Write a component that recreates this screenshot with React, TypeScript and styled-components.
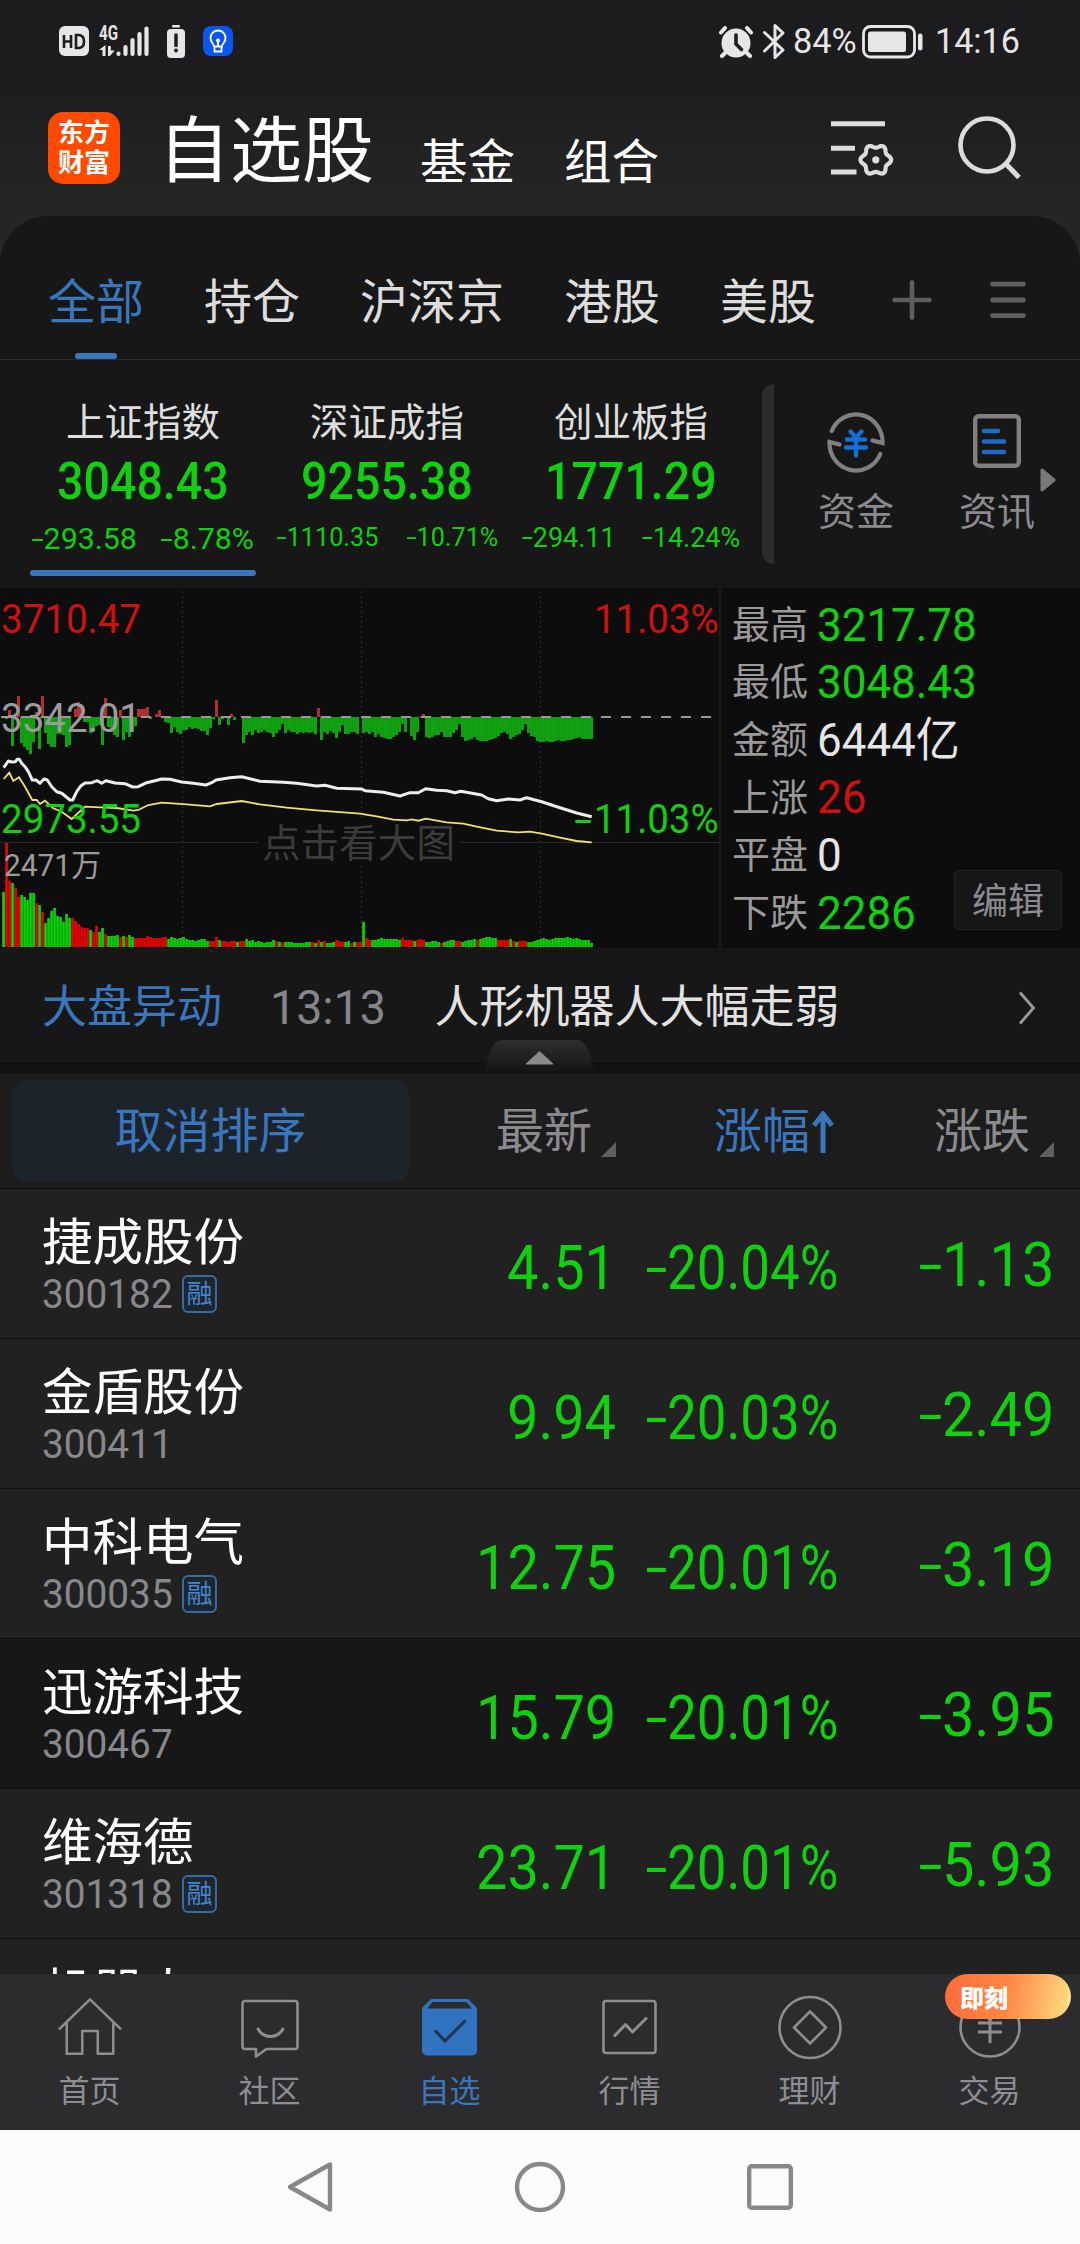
import React from 'react';
import styled, { createGlobalStyle } from 'styled-components';

const C = {
  blue: '#3a76bd',
  green: '#10d010',
  red: '#d01010',
  text: '#e2e2e2',
  muted: '#8b8b8f',
  panel: '#171717',
};

const Global = createGlobalStyle`
  * { box-sizing: border-box; }
  html, body { margin: 0; padding: 0; background: #1c1c1e; }
  body { font-family: Roboto, "Noto Sans CJK SC", sans-serif; -webkit-font-smoothing: antialiased; }
  svg { display: block; flex: none; }
`;

const Screen = styled.div`
  width: 1080px;
  height: 2244px;
  display: flex;
  flex-direction: column;
  overflow: hidden;
  color: ${C.text};
  white-space: nowrap;
`;

/* ---------- numbers ---------- */
const NumBox = styled.span<{ $size: number; $squeeze: number; $color: string; $origin: string; $weight: number }>`
  display: inline-block;
  flex: none;
  font-size: ${p => p.$size}px;
  line-height: 1;
  font-weight: ${p => p.$weight};
  color: ${p => p.$color};
  transform: scaleX(${p => p.$squeeze});
  transform-origin: ${p => p.$origin} center;
`;
const Minus = styled.span`
  display: inline-block;
  width: 0.4em;
  text-align: center;
  transform: scale(1.5, 0.92);
`;
type NumProps = { v: string; size: number; squeeze?: number; color?: string; origin?: string; weight?: number };
const Num = ({ v, size, squeeze = 1, color = C.green, origin = 'left', weight = 400 }: NumProps) => (
  <NumBox $size={size} $squeeze={squeeze} $color={color} $origin={origin} $weight={weight}>
    {v.startsWith('-') ? <><Minus>-</Minus>{v.slice(1)}</> : v}
  </NumBox>
);

/* ---------- header ---------- */
const Top = styled.header`
  height: 264px;
  margin-bottom: -48px;
  flex: none;
  background: linear-gradient(#1c1c1e 0, #1d1d1f 90px, #252525 200px, #262626);
`;
const StatusBar = styled.div`
  height: 82px;
  display: flex;
  align-items: center;
  justify-content: space-between;
  padding: 0 57px 0 59px;
`;
const StatusLeft = styled.div`
  display: flex;
  align-items: center;
`;
const StatusRight = styled.div`
  display: flex;
  align-items: center;
  padding-top: 1px;
`;
const Gap = styled.span<{ $w: number }>`
  width: ${p => p.$w}px;
  flex: none;
`;
const TitleRow = styled.div`
  height: 134px;
  display: flex;
  align-items: flex-start;
  padding: 30px 59px 0 48px;
`;
const Logo = styled.div`
  width: 72px;
  height: 72px;
  border-radius: 15px;
  background: #ff4a00;
  color: #fff;
  font: 700 26px/30px "Noto Sans CJK SC", sans-serif;
  text-align: center;
  padding-top: 4px;
`;
const Title = styled.h1`
  margin: 0 0 0 38px;
  font-size: 72px;
  line-height: 72px;
  font-weight: 400;
  color: #fff;
  padding-top: 4px;
`;
const SubTitle = styled.span<{ $ml: number }>`
  margin-left: ${p => p.$ml}px;
  padding-top: 27px;
  font-size: 47.5px;
  line-height: 48px;
  color: #fff;
`;
const HeadIcons = styled.div`
  margin-left: auto;
  display: flex;
  gap: 63px;
  padding-top: 3px;
`;

/* ---------- tabs ---------- */
const Panel = styled.section`
  flex: none;
  height: 372px;
  background: ${C.panel};
  border-radius: 48px 48px 0 0;
  position: relative;
`;
const Tabs = styled.nav`
  height: 144px;
  border-bottom: 1px solid #2c2c2c;
  display: flex;
  gap: 60px;
  padding: 0 54px 0 48px;
`;
const Tab = styled.div<{ $on?: boolean }>`
  height: 143px;
  font-size: 48px;
  line-height: 48px;
  color: ${p => (p.$on ? C.blue : '#dddddd')};
  display: flex;
  flex-direction: column;
  align-items: center;
  justify-content: space-between;
  padding-top: 63px;
`;
const TabBar = styled.i`
  width: 42px;
  height: 6px;
  border-radius: 3px;
  background: ${C.blue};
`;
const TabIcons = styled.div`
  margin-left: auto;
  display: flex;
  align-items: center;
  gap: 58px;
  padding-top: 24px;
  height: 143px;
`;

/* ---------- indices ---------- */
const Indices = styled.div`
  height: 228px;
  display: flex;
  padding-left: 21px;
`;
const IndexCol = styled.div`
  width: 244px;
  display: flex;
  flex-direction: column;
  align-items: center;
`;
const IndexName = styled.div`
  margin-top: 43px;
  font-size: 38.5px;
  line-height: 40px;
  color: #dedede;
`;
const IndexValue = styled.div`
  margin-top: 13px;
  height: 52px;
`;
const IndexChange = styled.div`
  height: 32px;
  margin-top: 16px;
  display: flex;
  align-items: baseline;
  justify-content: center;
  gap: 25px;
`;
const IndexBar = styled.i`
  width: 226px;
  height: 6px;
  border-radius: 3px;
  margin-top: 14px;
  background: ${C.blue};
`;
const Divider = styled.div`
  width: 12px;
  height: 180px;
  margin: 24px 0 0 9px;
  border-radius: 12px 0 0 12px;
  background: #2c2c2e;
`;
const Shortcut = styled.div<{ $ml: number }>`
  margin-left: ${p => p.$ml}px;
  padding-top: 49px;
  width: 76px;
  display: flex;
  flex-direction: column;
  align-items: center;
`;
const ShortcutName = styled.div`
  margin-top: 19px;
  font-size: 38px;
  line-height: 40px;
  color: ${C.muted};
`;
const MoreMark = styled.div`
  padding: 108px 0 0 5px;
`;

/* ---------- market detail ---------- */
const Market = styled.section`
  flex: none;
  height: 360px;
  background: #0d0d0d;
  display: flex;
`;
const Stats = styled.div`
  width: 361px;
  border-left: 2px solid #1b1b1b;
  padding: 8px 0 0 11px;
  position: relative;
`;
const Stat = styled.div`
  height: 57.6px;
  display: flex;
  align-items: center;
`;
const StatName = styled.span`
  width: 85px;
  font-size: 38px;
  line-height: 40px;
  color: #9a9a9a;
`;
const EditButton = styled.button`
  position: absolute;
  right: 18px;
  bottom: 18px;
  width: 108px;
  height: 60px;
  padding: 3px 0 0;
  border: 1px solid #262626;
  border-radius: 6px;
  background: #161616;
  color: ${C.muted};
  font: 36px/40px Roboto, "Noto Sans CJK SC", sans-serif;
`;

/* ---------- news strip ---------- */
const Strip = styled.section`
  flex: none;
  height: 126px;
  background: ${C.panel};
  border-bottom: 12px solid #121212;
  display: flex;
  align-items: center;
  padding: 6px 44px 0 42px;
  position: relative;
`;
const StripTopic = styled.span`
  font-size: 45px;
  line-height: 48px;
  color: ${C.blue};
  width: 228px;
`;
const StripText = styled.span`
  font-size: 45px;
  line-height: 48px;
  color: ${C.text};
  margin-left: 45px;
  flex: 1;
`;
const Handle = styled.div`
  position: absolute;
  left: 484px;
  bottom: -9px;
`;

/* ---------- table ---------- */
const HeadRow = styled.div`
  flex: none;
  height: 115px;
  background: #1c1c1c;
  border-bottom: 1px solid #0c0c0c;
  display: flex;
  align-items: center;
  padding: 0 0 0 12px;
  font-size: 48px;
  line-height: 48px;
  color: #8a8a8e;
`;
const CancelSort = styled.div`
  width: 397px;
  height: 102px;
  border-radius: 16px;
  background: #1c232a;
  color: ${C.blue};
  text-align: center;
  line-height: 104px;
`;
const HeadCell = styled.div<{ $end: number; $on?: boolean }>`
  width: ${p => p.$end}px;
  height: 50px;
  display: flex;
  justify-content: flex-end;
  align-items: flex-end;
  color: ${p => (p.$on ? C.blue : '#8a8a8e')};
`;
const Corner = styled.i`
  margin: 0 0 -1px 9px;
  border-left: 15px solid transparent;
  border-bottom: 15px solid #5f5f61;
`;
const ArrowSlot = styled.span`
  margin: 0 0 3px 2px;
`;
const List = styled.main`
  flex: none;
  height: 785px;
  overflow: hidden;
  background: #212121;
`;
const Row = styled.div<{ $dark?: boolean }>`
  height: 150px;
  border-bottom: 1px solid #0e0e0e;
  background: ${p => (p.$dark ? '#171717' : '#212121')};
  display: flex;
`;
const NameCell = styled.div`
  width: 416px;
  padding: 29px 0 0 42px;
`;
const StockName = styled.div`
  font-size: 50.5px;
  line-height: 50px;
  color: #fff;
`;
const CodeLine = styled.div`
  display: flex;
  align-items: center;
  height: 40px;
  margin-top: 6px;
`;
const CodeSlot = styled.span`
  width: 140px;
  height: 41px;
`;
const Tag = styled.span`
  width: 35px;
  height: 38px;
  border: 2px solid #3b6a9e;
  border-radius: 6px;
  color: #4585cb;
  background: #1d252e;
  font-size: 26px;
  line-height: 35px;
  display: flex;
  justify-content: center;
`;
const NumCell = styled.div<{ $w: number; $top: number }>`
  width: ${p => p.$w}px;
  padding-top: ${p => p.$top}px;
  text-align: right;
`;

/* ---------- bottom ---------- */
const Nav = styled.nav`
  flex: none;
  height: 156px;
  background: #2c2c2e;
  display: flex;
`;
const NavItem = styled.div<{ $on?: boolean }>`
  width: 180px;
  display: flex;
  flex-direction: column;
  align-items: center;
  padding: 20px 1px 0 0;
  position: relative;
  color: ${p => (p.$on ? C.blue : '#8e8e92')};
  font-size: 31px;
  line-height: 32px;
`;
const NavLabel = styled.span`
  margin-top: 16px;
`;
const Badge = styled.span`
  position: absolute;
  left: 45px;
  top: 0;
  width: 126px;
  height: 45px;
  border-radius: 23px;
  padding-left: 15px;
  background: linear-gradient(100deg, #ff6a3a 0, #ff8844 50%, #ffd27a 92%, #fff0a0);
  color: #fff;
  font: 900 24px/45px "Noto Sans CJK SC", sans-serif;
`;
const SystemBar = styled.footer`
  flex: none;
  height: 114px;
  background: #fcfcfc;
  display: flex;
  align-items: center;
  justify-content: center;
  gap: 178px;
  padding-right: 1px;
`;

/* ---------- icons ---------- */
const HdIcon = () => (
  <svg width="30" height="30" viewBox="0 0 30 30">
    <rect width="30" height="30" rx="6" fill="#e6e6e6" />
    <path d="M5 9v13M12 9v13M5 15.500h7M17 9v13h3q5-.5 5-6.500t-5-6.500z" fill="none" stroke="#1d1d1f" strokeWidth="2.600" />
  </svg>
);
const NetLabel = styled.span`
  position: absolute;
  left: 0;
  top: -1px;
  font-size: 21px;
  line-height: 19px;
  font-weight: 700;
  color: #e6e6e6;
  transform: scaleX(0.72);
  transform-origin: left center;
`;
const Net = styled.div`
  position: relative;
`;
const Signal = () => (
  <Net>
    <NetLabel>4G</NetLabel>
    <svg width="50" height="32" viewBox="0 0 50 32">
      <g stroke="#e6e6e6" strokeWidth="4.200" strokeLinecap="round">
        <path d="M19.500 28.500v.5M26.500 22v7M33.500 15v14M40.500 9v20M47.500 3.500v25.500" />
      </g>
      <path d="M6.500 31h-3v-6H0l6.500-5zM9 21h2.800v4.500h4l-5 5.500H9z" fill="#e6e6e6" />
    </svg>
  </Net>
);
const BatteryAlert = () => (
  <svg width="18" height="33" viewBox="0 0 18 33">
    <rect x="5" y="0" width="8" height="2.500" rx="1" fill="#e6e6e6" />
    <rect y="4" width="18" height="29" rx="4" fill="#e6e6e6" />
    <path d="M9 10v10.500" stroke="#1d1d1f" strokeWidth="3.500" strokeLinecap="round" />
    <circle cx="9" cy="25.500" r="2" fill="#1d1d1f" />
  </svg>
);
const Bulb = () => (
  <svg width="30" height="30" viewBox="0 0 30 30">
    <rect width="30" height="30" rx="8" fill="#0b57ee" />
    <g fill="none" stroke="#fff" strokeWidth="1.800">
      <path d="M11 20.500c0-3-3.500-4-3.500-8.500a7.500 7.500 0 0 1 15 0c0 4.500-3.500 5.500-3.500 8.500zM11.500 21v4.500h7V21M15 15v5" />
    </g>
    <circle cx="15" cy="14.500" r="2" fill="#fff" />
  </svg>
);
const Alarm = () => (
  <svg width="34" height="32" viewBox="0 0 34 32">
    <circle cx="17" cy="17" r="14.500" fill="#e6e6e6" />
    <path d="M2 6.500l4-4.500M32 6.500L28 2M7 26l-4 4M27 26l4 4" stroke="#e6e6e6" strokeWidth="4" strokeLinecap="round" />
    <path d="M17 9v9l5.500 5.500" fill="none" stroke="#1d1d1f" strokeWidth="3.600" strokeLinecap="round" />
  </svg>
);
const Bluetooth = () => (
  <svg width="22" height="35" viewBox="0 0 22 35">
    <path d="M1.500 8.500L20 26l-8 7.500V1.500L20 9 1.500 27" fill="none" stroke="#e6e6e6" strokeWidth="3" strokeLinejoin="round" strokeLinecap="round" />
  </svg>
);
const Battery = () => (
  <svg width="61" height="34" viewBox="0 0 61 34">
    <rect x="1.500" y="1.500" width="51" height="30.500" rx="7" fill="none" stroke="#e6e6e6" strokeWidth="2.800" />
    <rect x="6" y="6.500" width="38" height="20.500" rx="2.500" fill="#e6e6e6" />
    <rect x="56" y="8.500" width="4.500" height="17" rx="2.200" fill="#e6e6e6" />
  </svg>
);

/* six-lobed gear outline: radius swings between lobes and notches */
const gearPath = (() => {
  const n = 72;
  let d = '';
  for (let i = 0; i <= n; i++) {
    const t = (i / n) * Math.PI * 2;
    const r = 13.700 + 1.700 * Math.cos(6 * t);
    d += `${i ? 'L' : 'M'}${(44.800 + r * Math.cos(t)).toFixed(2)} ${(44.800 + r * Math.sin(t)).toFixed(2)}`;
  }
  return d + 'z';
})();
const FilterIcon = () => (
  <svg width="63" height="63" viewBox="0 0 63 63">
    <path d="M0 8.800h54M0 33.200h24M0 57h25.500" stroke="#dcdcdc" strokeWidth="5" />
    <path d={gearPath} fill="none" stroke="#dcdcdc" strokeWidth="4.200" strokeLinejoin="round" />
    <circle cx="44.800" cy="44.800" r="3.600" fill="#dcdcdc" />
  </svg>
);
const SearchIcon = () => (
  <svg width="64" height="64" viewBox="0 0 64 64">
    <circle cx="30" cy="30" r="26.500" fill="none" stroke="#dcdcdc" strokeWidth="4.600" />
    <path d="M48.500 48.500L62 62.500" stroke="#dcdcdc" strokeWidth="5" />
  </svg>
);
const PlusIcon = () => (
  <svg width="40" height="40" viewBox="0 0 40 40">
    <path d="M20 2.500v35M2.500 20h35" stroke="#5f5f5f" strokeWidth="4.600" strokeLinecap="round" />
  </svg>
);
const MenuIcon = () => (
  <svg width="36" height="40" viewBox="0 0 36 40">
    <path d="M2.500 4.200h31M2.500 20h31M2.500 35.600h31" stroke="#5f5f5f" strokeWidth="4.800" strokeLinecap="round" />
  </svg>
);
const FundsIcon = () => (
  <svg width="60" height="64" viewBox="0 0 60 64">
    <g fill="none" stroke="#808080" strokeWidth="4.200">
      <path d="M5.700 22A26.500 27.500 0 0 1 56.500 34L46.500 31.500" strokeLinecap="round" />
      <path d="M54.300 45A26.500 27.500 0 0 1 3.500 33L13.500 35.500" strokeLinecap="round" />
    </g>
    <path d="M24.500 22.500l5.500 6 5.500-6M21 30.500h18M20 38.500h20M30 29.500v17" fill="none" stroke="#126fd8" strokeWidth="4.400" strokeLinecap="round" />
  </svg>
);
const NewsIcon = () => (
  <svg width="48" height="64" viewBox="0 0 48 64">
    <rect x="2.200" y="7.200" width="43.600" height="49.600" rx="3.500" fill="none" stroke="#808080" strokeWidth="4.400" />
    <path d="M11 22h14M11 32.500h20M11 43h20" stroke="#1f6cc4" strokeWidth="4.600" strokeLinecap="round" />
  </svg>
);
const ic = { fill: 'none', stroke: 'currentColor', strokeWidth: 2.6, strokeLinejoin: 'round' as const };
const navIcons: Record<string, React.ReactNode> = {
  首页: (
    <g {...ic}>
      <path d="M1 35.500L33 4.500l32 31M9 29v31.500h16V37h16v23.500h16V29" transform="translate(1 1) scale(0.970)" />
    </g>
  ),
  社区: (
    <g {...ic}>
      <path d="M8 7h50a2.500 2.500 0 0 1 2.500 2.500v43a2.500 2.500 0 0 1-2.500 2.500H29.500L19 62.500V55H8a2.500 2.500 0 0 1-2.500-2.500v-43A2.500 2.500 0 0 1 8 7z" />
      <path d="M20.500 34q4.500 8.500 13 8.500t13-8.500" strokeWidth="3" />
    </g>
  ),
  自选: (
    <g>
      <path d="M14 5h37l9 9V56.500a5 5 0 0 1-5 5h-45a5 5 0 0 1-5-5V14z" fill="#3173c1" />
      <path d="M15.500 8h34l5.500 6.500h-45z" fill="#2c2c2e" />
      <path d="M18 36.500l10 10.500L48.500 26.500" fill="none" stroke="#243347" strokeWidth="3" />
    </g>
  ),
  行情: (
    <g {...ic}>
      <rect x="6.500" y="7" width="52" height="52" rx="2.500" />
      <path d="M17 42.500l11.500-12 7 7.500L50 23.500" strokeWidth="3" />
    </g>
  ),
  理财: (
    <g {...ic}>
      <circle cx="33" cy="33.500" r="30.500" />
      <path d="M33 17.500l16 16-16 16-16-16z" />
    </g>
  ),
  交易: (
    <g {...ic}>
      <circle cx="33" cy="33" r="29.500" />
      <path d="M21 29h24M21 38h24M33 26v23M24 15l9 11 9-11" strokeWidth="3" strokeLinejoin="miter" />
    </g>
  ),
};

/* ---------- intraday chart ---------- */
const flow = [
  1, 2, -7, 29, 2, -21, 26, 30, 33, 37, 25, -5, 32, -21, 16, 27, 30, 30, 17, 17, 18, 30, 28, 0, -8, -15, -10, 5, 5, 16,
  14, 9, 8, 28, -19, 10, 15, 18, 20, -7, 23, 15, 20, 15, 9, -8, -8, -8, -10, 2, 0, -3, -7, 0, 5, 6, 16, 10, 15, 17,
  13, 13, 10, 12, 11, 12, 14, 14, 18, 11, 2, -17, 8, 2, 0, 8, -3, 3, 0, 0, 26, 18, 15, 18, 13, 16, 15, 13, 15, 16,
  20, 16, 13, 7, 16, 13, 15, 15, 17, 15, 16, 15, 16, 15, 17, -9, 23, 15, 17, 14, 16, 21, 15, 8, 17, 17, 15, 15, 17, 0,
  16, 15, 17, 15, 20, 17, 20, 21, 22, 22, 20, 18, 15, 7, 15, -1, 19, 23, 15, -1, -3, 20, 21, 20, 18, 18, 15, 20, 20, 20,
  16, 13, 7, 20, 24, 23, 22, 20, 23, 24, 24, 24, 23, 22, 21, 19, 16, 15, 17, 22, 20, 18, 17, 13, 7, 16, 19, 20, 24, 25,
  25, 24, 25, 25, 24, 23, 24, 24, 23, 23, 22, 21, 20, 22, 22, 22, 22,
];
const volumes = [
  55, 104, 66, 64, 59, 50, 52, 50, 47, 54, 54, 44, 42, 35, 24, 29, 36, 39, 31, 30, 25, 33, 29, 29, 26, 23, 20, 19, 19, 17,
  15, 21, 15, 19, 13, 11, 11, 11, 12, 10, 11, 10, 12, 10, 9, 9, 9, 9, 11, 10, 9, 9, 9, 10, 10, 8, 10, 9, 8, 9,
  10, 8, 7, 7, 6, 7, 8, 8, 6, 6, 6, 10, 7, 6, 6, 5, 6, 6, 5, 6, 6, 8, 6, 7, 5, 6, 5, 4, 5, 5,
  7, 6, 5, 4, 5, 5, 5, 4, 4, 4, 4, 5, 5, 5, 4, 7, 5, 6, 4, 4, 5, 7, 6, 5, 5, 6, 4, 5, 5, 5,
  25, 9, 7, 7, 7, 8, 9, 8, 8, 8, 8, 8, 7, 9, 7, 7, 7, 6, 7, 8, 7, 5, 5, 6, 6, 5, 4, 5, 6, 7,
  7, 6, 6, 5, 6, 7, 7, 8, 7, 8, 9, 10, 10, 9, 9, 7, 7, 7, 7, 8, 6, 5, 6, 6, 6, 5, 5, 6, 7, 8,
  9, 8, 7, 8, 9, 9, 9, 9, 10, 9, 8, 9, 8, 7, 7, 7, 4,
];
const redRanges: [number, number][] = [
  [1, 2], [4, 5], [11, 11], [13, 13], [23, 28], [30, 31], [34, 34], [39, 39], [41, 41], [44, 54], [69, 71], [73, 77], [79, 80],
  [91, 91], [93, 93], [103, 103], [105, 105], [107, 107], [111, 113], [116, 116], [118, 119], [121, 122], [133, 136],
  [138, 140], [146, 146], [151, 152], [158, 158], [165, 168], [170, 170], [172, 174],
];
const isRed = (i: number) => redRanges.some(([a, b]) => i >= a && i <= b);

const priceLine: [number, number][] = [
  [11, 563], [25, 543], [35, 546], [46, 545], [52, 538], [58, 538], [65, 550], [75, 560], [85, 575], [97, 600], [108, 600],
  [120, 610], [132, 597], [142, 600], [155, 620], [170, 635], [185, 640], [198, 650], [210, 660], [218, 660], [230, 635],
  [242, 618], [255, 609], [275, 608], [292, 602], [305, 610], [318, 602], [345, 609], [375, 611], [398, 621], [415, 620],
  [440, 608], [465, 602], [485, 597], [510, 598], [545, 606], [580, 610], [618, 615], [635, 608], [648, 600], [690, 593],
  [725, 590], [780, 604], [850, 607], [890, 610], [950, 618], [975, 616], [1010, 625], [1085, 627], [1095, 632], [1150, 637],
  [1200, 648], [1230, 638], [1255, 638], [1277, 626], [1310, 631], [1340, 632], [1365, 638], [1382, 634], [1445, 645],
  [1465, 656], [1490, 662], [1525, 657], [1560, 660], [1580, 653], [1625, 665], [1680, 683], [1730, 699], [1775, 710],
];
const avgLine: [number, number][] = [
  [11, 597], [28, 578], [40, 603], [57, 592], [75, 620], [97, 660], [110, 660], [120, 672], [135, 662], [160, 685], [185, 695],
  [215, 717], [255, 680], [300, 682], [350, 684], [400, 692], [415, 690], [445, 675], [485, 668], [560, 673], [630, 679],
  [650, 672], [725, 663], [780, 673], [860, 683], [950, 691], [1080, 701], [1130, 709], [1180, 719], [1220, 721], [1235, 718],
  [1255, 722], [1277, 716], [1340, 727], [1390, 731], [1430, 740], [1490, 752], [1555, 757], [1590, 755], [1625, 761],
  [1680, 773], [1730, 783], [1775, 787],
];
const toPoints = (pts: [number, number][]) => pts.map(([x, y]) => `${(x / 3).toFixed(1)},${(y / 3 - 8).toFixed(1)}`).join(' ');

const Chart = () => (
  <svg width="719" height="360" viewBox="0 0 719 360" fontFamily='Roboto, "Noto Sans CJK SC", sans-serif'>
    <path d="M182.500 3v357M361.500 3v357M540.500 3v357" stroke="#303030" strokeWidth="1" strokeDasharray="2 3" />
    <path d="M1 254.500H719" stroke="#2b2b2b" strokeWidth="1" />
    {flow.map((v, i) => (
      <rect key={i} x={2 + 3 * i} width="3" y={v < 0 ? 129 + v : 129} height={Math.abs(v)} fill={v < 0 ? '#b03030' : '#12a312'} stroke="#0d6f0d" strokeOpacity={v < 0 ? 0 : 0.4} strokeWidth="0.500" />
    ))}
    <path d="M1 129H719" stroke="#999" strokeWidth="2" strokeDasharray="10 10" />
    {volumes.map((v, i) => (
      <rect key={i} x={2.2 + 3 * i} width="2.700" y={359 - v} height={v} fill={isRed(i) ? '#e30505' : '#0bd00b'} />
    ))}
    <rect x="258" y="230" width="202" height="44" fill="#0d0d0d" />
    <text x="262" y="269" fontSize="38.500" textLength="193" fill="#3b3b3b">点击看大图</text>
    <polyline points={toPoints(avgLine)} fill="none" stroke="#f2e26a" strokeWidth="1.800" />
    <polyline points={toPoints(priceLine)} fill="none" stroke="#ededed" strokeWidth="3" strokeLinejoin="round" />
    <g fontSize="40">
      <text x="1" y="45" fill={C.red} textLength="140" lengthAdjust="spacingAndGlyphs">3710.47</text>
      <text x="1" y="144" fill="#9b9b9b" textLength="140" lengthAdjust="spacingAndGlyphs">3342.01</text>
      <text x="1" y="244.500" fill={C.green} textLength="140" lengthAdjust="spacingAndGlyphs">2973.55</text>
      <text x="594" y="45" fill={C.red} textLength="124.500" lengthAdjust="spacingAndGlyphs">11.03%</text>
      <text x="574" y="246" fill={C.green} textLength="18" lengthAdjust="spacingAndGlyphs">-</text>
      <text x="594" y="244.500" fill={C.green} textLength="124.500" lengthAdjust="spacingAndGlyphs">11.03%</text>
    </g>
    <text x="4" y="288" fontSize="31" fill="#9b9b9b" textLength="97" lengthAdjust="spacingAndGlyphs">2471万</text>
  </svg>
);

/* ---------- data ---------- */
const indices = [
  { name: '上证指数', value: '3048.43', diff: '-293.58', pct: '-8.78%', a: 30, sa: 1.01, on: true },
  { name: '深证成指', value: '9255.38', diff: '-1110.35', pct: '-10.71%', a: 26, sa: 0.97 },
  { name: '创业板指', value: '1771.29', diff: '-294.11', pct: '-14.24%', a: 27.5, sa: 0.98 },
];
const stats = [
  ['最高', '3217.78', C.green],
  ['最低', '3048.43', C.green],
  ['金额', '6444亿', '#e6e6e6'],
  ['上涨', '26', C.red],
  ['平盘', '0', '#e6e6e6'],
  ['下跌', '2286', C.green],
];
const stocks = [
  { name: '捷成股份', code: '300182', tag: true, price: '4.51', pct: '-20.04%', diff: '-1.13' },
  { name: '金盾股份', code: '300411', price: '9.94', pct: '-20.03%', diff: '-2.49' },
  { name: '中科电气', code: '300035', tag: true, price: '12.75', pct: '-20.01%', diff: '-3.19' },
  { name: '迅游科技', code: '300467', price: '15.79', pct: '-20.01%', diff: '-3.95', dark: true },
  { name: '维海德', code: '301318', tag: true, price: '23.71', pct: '-20.01%', diff: '-5.93' },
];

export default function App() {
  return (
    <Screen>
      <Global />
      <Top>
        <StatusBar>
          <StatusLeft>
            <HdIcon /><Gap $w={10} /><Signal /><Gap $w={18} /><BatteryAlert /><Gap $w={18} /><Bulb />
          </StatusLeft>
          <StatusRight>
            <Alarm /><Gap $w={10} /><Bluetooth /><Gap $w={8} />
            <Num v="84%" size={35} squeeze={0.98} color="#e6e6e6" /><Gap $w={4} />
            <Battery /><Gap $w={12} />
            <Num v="14:16" size={35.5} squeeze={0.96} color="#e6e6e6" />
          </StatusRight>
        </StatusBar>
        <TitleRow>
          <Logo>东方<br />财富</Logo>
          <Title>自选股</Title>
          <SubTitle $ml={46}>基金</SubTitle>
          <SubTitle $ml={49}>组合</SubTitle>
          <HeadIcons><FilterIcon /><SearchIcon /></HeadIcons>
        </TitleRow>
      </Top>

      <Panel>
        <Tabs>
          <Tab $on>全部<TabBar /></Tab>
          <Tab>持仓</Tab>
          <Tab>沪深京</Tab>
          <Tab>港股</Tab>
          <Tab>美股</Tab>
          <TabIcons><PlusIcon /><MenuIcon /></TabIcons>
        </Tabs>
        <Indices>
          {indices.map(x => (
            <IndexCol key={x.name}>
              <IndexName>{x.name}</IndexName>
              <IndexValue><Num v={x.value} size={52} squeeze={0.895} weight={500} origin="center" /></IndexValue>
              <IndexChange>
                <Num v={x.diff} size={x.a} squeeze={x.sa} origin="center" />
                <Num v={x.pct} size={x.a} squeeze={x.sa} origin="center" />
              </IndexChange>
              {x.on && <IndexBar />}
            </IndexCol>
          ))}
          <Divider />
          <Shortcut $ml={44}><FundsIcon /><ShortcutName>资金</ShortcutName></Shortcut>
          <Shortcut $ml={65}><NewsIcon /><ShortcutName>资讯</ShortcutName></Shortcut>
          <MoreMark>
            <svg width="16" height="24" viewBox="0 0 16 24"><path d="M2 2l12 10L2 22z" fill="#787878" stroke="#787878" strokeWidth="3" strokeLinejoin="round" /></svg>
          </MoreMark>
        </Indices>
      </Panel>

      <Market>
        <Chart />
        <Stats>
          {stats.map(([k, v, c]) => (
            <Stat key={k}><StatName>{k}</StatName><Num v={v} size={46.5} squeeze={0.945} color={c} /></Stat>
          ))}
          <EditButton>编辑</EditButton>
        </Stats>
      </Market>

      <Strip>
        <StripTopic>大盘异动</StripTopic>
        <Num v="13:13" size={48} squeeze={0.97} color="#86868a" />
        <StripText>人形机器人大幅走弱</StripText>
        <svg width="18" height="34" viewBox="0 0 18 34"><path d="M2 1.500L15.500 17 2 32.500" fill="none" stroke="#9a9a9c" strokeWidth="2.800" /></svg>
        <Handle>
          <svg width="111" height="31" viewBox="0 0 111 31">
            <defs>
              <linearGradient id="handle" x1="0" y1="0" x2="0" y2="1"><stop offset="0" stopColor="#2e2e2e" /><stop offset="1" stopColor="#151515" /></linearGradient>
            </defs>
            <path d="M0 31C4 31 3 0 19 0H92C108 0 107 31 111 31z" fill="url(#handle)" />
            <path d="M55.500 11.500L69 24H42z" fill="#8a8a8a" stroke="#8a8a8a" strokeLinejoin="round" />
          </svg>
        </Handle>
      </Strip>

      <HeadRow>
        <CancelSort>取消排序</CancelSort>
        <HeadCell $end={207}>最新<Corner /></HeadCell>
        <HeadCell $end={218} $on>
          涨幅
          <ArrowSlot><svg width="22" height="42" viewBox="0 0 22 42"><path d="M11 42V3M2 14.500L11 3l9 11.500" fill="none" stroke="#3a76bd" strokeWidth="5" /></svg></ArrowSlot>
        </HeadCell>
        <HeadCell $end={220}>涨跌<Corner /></HeadCell>
      </HeadRow>

      <List>
        {stocks.map(s => (
          <Row key={s.code} $dark={s.dark}>
            <NameCell>
              <StockName>{s.name}</StockName>
              <CodeLine>
                <CodeSlot><Num v={s.code} size={41} squeeze={0.945} color="#88888c" /></CodeSlot>
                {s.tag && <Tag>融</Tag>}
              </CodeLine>
            </NameCell>
            <NumCell $w={200} $top={49}><Num v={s.price} size={61} squeeze={0.915} origin="right" /></NumCell>
            <NumCell $w={217} $top={49}><Num v={s.pct} size={61} squeeze={0.865} origin="right" /></NumCell>
            <NumCell $w={221} $top={46}><Num v={s.diff} size={61} squeeze={0.945} origin="right" /></NumCell>
          </Row>
        ))}
        <Row><NameCell><StockName>机器人</StockName></NameCell></Row>
      </List>

      <Nav>
        {Object.entries(navIcons).map(([label, icon]) => (
          <NavItem key={label} $on={label === '自选'}>
            <svg width="66" height="66" viewBox="0 0 66 66">{icon}</svg>
            <NavLabel>{label}</NavLabel>
            {label === '交易' && <Badge>即刻</Badge>}
          </NavItem>
        ))}
      </Nav>

      <SystemBar>
        <svg width="52" height="52" viewBox="0 0 52 52"><path d="M46 3.500v45L6 26z" fill="none" stroke="#888" strokeWidth="4.400" strokeLinejoin="round" /></svg>
        <svg width="52" height="52" viewBox="0 0 52 52"><circle cx="26" cy="26" r="23" fill="none" stroke="#888" strokeWidth="4.400" /></svg>
        <svg width="52" height="52" viewBox="0 0 52 52"><rect x="5.200" y="5.200" width="41.600" height="41.600" rx="2.500" fill="none" stroke="#888" strokeWidth="4.400" /></svg>
      </SystemBar>
    </Screen>
  );
}
